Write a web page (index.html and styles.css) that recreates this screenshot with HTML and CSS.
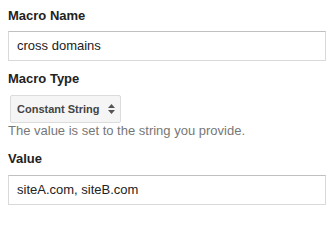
FILE: index.html
```html
<!DOCTYPE html>
<html>
<head>
<meta charset="utf-8">
<link rel="stylesheet" href="styles.css">
</head>
<body>
<div class="form">
  <div class="label">Macro Name</div>
  <div class="input">cross domains</div>
  <div class="label gap-type">Macro Type</div>
  <div class="select">
    <span class="select-text">Constant String</span>
    <svg class="arrows" width="7" height="10" viewBox="0 0 7 10">
      <path d="M3.5 0 L7 4 L0 4 Z" fill="#555"/>
      <path d="M0 6 L7 6 L3.5 10 Z" fill="#555"/>
    </svg>
  </div>
  <div class="help">The value is set to the string you provide.</div>
  <div class="label gap-value">Value</div>
  <div class="input">siteA.com, siteB.com</div>
</div>
</body>
</html>
```
FILE: styles.css
```css
html, body {
  margin: 0;
  padding: 0;
  background: #fff;
}
.form {
  padding: 8px 7px 0 8px;
  font-family: Arial, "Liberation Sans", sans-serif;
  font-size: 13px;
  color: #222;
  display: flex;
  flex-direction: column;
  align-items: flex-start;
}
.label {
  font-weight: bold;
  line-height: 16px;
  color: #222;
  margin-bottom: 7px;
}
.gap-type {
  margin-top: 10px;
  margin-bottom: 8px;
}
.gap-value {
  margin-top: 12px;
  margin-bottom: 8px;
}
.input {
  box-sizing: border-box;
  width: 318px;
  height: 30px;
  border: 1px solid #d9d9d9;
  border-top-color: #c0c0c0;
  padding: 0 8px;
  line-height: 28px;
  color: #222;
}
.select {
  box-sizing: border-box;
  margin-left: 2px;
  width: 111px;
  height: 28px;
  border: 1px solid #dcdcdc;
  border-radius: 2px;
  background: #f5f5f5;
  display: flex;
  align-items: center;
  padding: 0 5px 0 6px;
  justify-content: space-between;
}
.select-text {
  font-size: 11px;
  font-weight: bold;
  color: #444;
}
.arrows {
  display: block;
}
.help {
  line-height: 16px;
  color: #777;
}
```
